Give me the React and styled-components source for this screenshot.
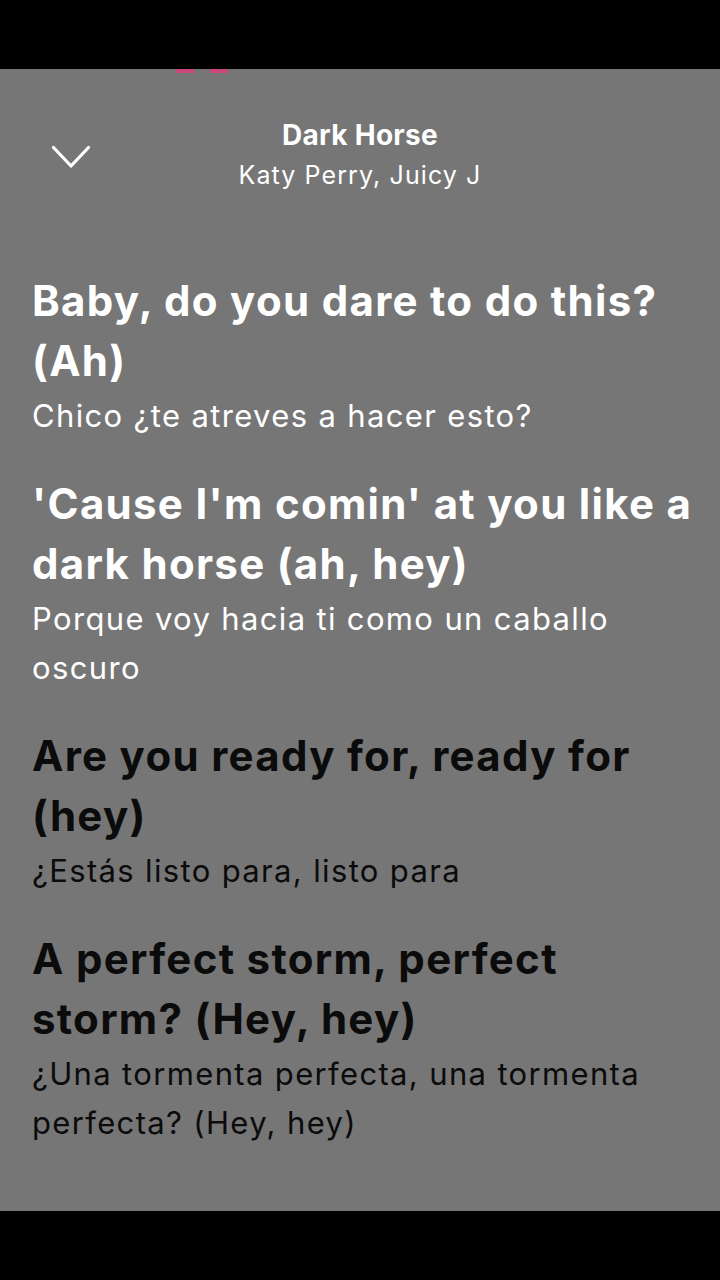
import React from "react";
import styled, { createGlobalStyle } from "styled-components";

const Global = createGlobalStyle`
  html, body { margin: 0; padding: 0; background: #000; }
  body { font-family: Inter, "Noto Sans", sans-serif; -webkit-font-smoothing: antialiased; }
`;

const Frame = styled.div`
  width: 720px;
  height: 1280px;
  display: flex;
  flex-direction: column;
  background: #000;
  overflow: hidden;
`;

const Bar = styled.div`
  height: ${(p) => p.$h}px;
  flex: none;
  background: #000;
`;

const Screen = styled.main`
  flex: 1;
  background: #767676;
  display: flex;
  flex-direction: column;
  padding: 0 32px;
  overflow: hidden;
`;

const Dots = styled.div`
  display: flex;
  gap: 16px;
  padding-left: 144px;
  height: 4px;
`;

const Dot = styled.span`
  width: 18px;
  height: 4px;
  background: #d8407a;
  opacity: 0.85;
`;

const Header = styled.header`
  display: grid;
  grid-template-columns: 1fr auto 1fr;
  align-items: center;
  padding-top: 45px;
`;

const Back = styled.button`
  justify-self: start;
  border: 0;
  background: none;
  padding: 0;
  margin-left: 19px;
  margin-top: 4px;
  display: flex;
  cursor: pointer;
`;

const Titles = styled.div`
  display: flex;
  flex-direction: column;
  align-items: center;
  gap: 6px;
`;

const Song = styled.div`
  color: #fff;
  font-weight: 700;
  font-size: 28px;
  line-height: 34px;
  letter-spacing: 0.3px;
`;

const Artist = styled.div`
  color: #fff;
  font-weight: 400;
  font-size: 25px;
  line-height: 34px;
  letter-spacing: 1.1px;
`;

const Lyrics = styled.section`
  display: flex;
  flex-direction: column;
  gap: 34px;
  margin-top: 79px;
`;

const Verse = styled.div`
  display: flex;
  flex-direction: column;
  color: ${(p) => (p.$past ? "#fff" : "#0b0b0b")};
`;

const Line = styled.span`
  display: block;
  white-space: nowrap;
  font-weight: 700;
  font-size: 42px;
  line-height: 60px;
  letter-spacing: 1.3px;
`;

const Translation = styled.span`
  display: block;
  white-space: nowrap;
  font-weight: 400;
  font-size: 31px;
  line-height: 49px;
  letter-spacing: 1.35px;
  &:first-of-type {
    margin-top: 2px;
  }
`;

const verses = [
  {
    past: true,
    lines: ["Baby, do you dare to do this?", "(Ah)"],
    tr: ["Chico ¿te atreves a hacer esto?"],
  },
  {
    past: true,
    lines: ["'Cause I'm comin' at you like a", "dark horse (ah, hey)"],
    tr: ["Porque voy hacia ti como un caballo", "oscuro"],
  },
  {
    past: false,
    lines: ["Are you ready for, ready for", "(hey)"],
    tr: ["¿Estás listo para, listo para"],
  },
  {
    past: false,
    lines: ["A perfect storm, perfect", "storm? (Hey, hey)"],
    tr: ["¿Una tormenta perfecta, una tormenta", "perfecta? (Hey, hey)"],
  },
];

export default function App() {
  return (
    <>
      <Global />
      <Frame>
        <Bar $h={69} />
        <Screen>
          <Dots>
            <Dot />
            <Dot />
          </Dots>
          <Header>
            <Back aria-label="Close">
              <svg width="40" height="24" viewBox="0 0 40 24" fill="none">
                <path d="M2.5 2.5 L20 21 L37.5 2.5" stroke="#fff" strokeWidth="3.2" strokeLinecap="round" strokeLinejoin="round" />
              </svg>
            </Back>
            <Titles>
              <Song>Dark Horse</Song>
              <Artist>Katy Perry, Juicy J</Artist>
            </Titles>
            <div />
          </Header>
          <Lyrics>
            {verses.map((v, i) => (
              <Verse key={i} $past={v.past}>
                {v.lines.map((l, j) => (
                  <Line key={j}>{l}</Line>
                ))}
                {v.tr.map((t, j) => (
                  <Translation key={j}>{t}</Translation>
                ))}
              </Verse>
            ))}
          </Lyrics>
        </Screen>
        <Bar $h={69} />
      </Frame>
    </>
  );
}
